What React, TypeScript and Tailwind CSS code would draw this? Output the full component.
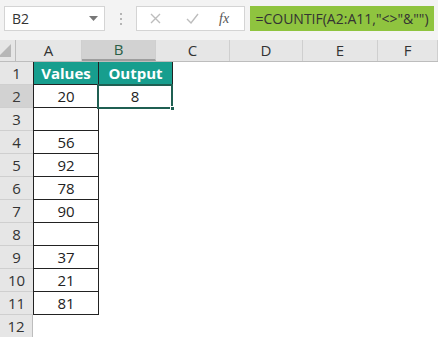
import React from 'react';

const cols = [
  { name: 'A', w: 66 },
  { name: 'B', w: 74 },
  { name: 'C', w: 74 },
  { name: 'D', w: 73 },
  { name: 'E', w: 75 },
  { name: 'F', w: 60 },
];

const values: (string | null)[] = ['20', null, '56', '92', '78', '90', null, '37', '21', '81'];

const font = { fontFamily: '"Open Sans", "Noto Sans", sans-serif' };

const App: React.FC = () => {
  return (
    <div className="w-[438px] h-[337px] overflow-hidden bg-[#f3f3f3] text-[#222]" style={font}>
      {/* Name box + formula bar */}
      <div className="flex items-center h-[40px] pb-[7px] pt-[4px] pl-[4px]">
        <div className="flex items-center justify-between w-[101px] h-[25px] bg-white border border-[#d4d4d4] pl-[7px] pr-[6px]">
          <span className="text-[14px] text-[#333]">B2</span>
          <svg width="9" height="5" viewBox="0 0 9 5"><path d="M0 0h9L4.5 5z" fill="#777" /></svg>
        </div>
        <div className="flex flex-col gap-[3px] ml-[15px] mr-[14px]">
          <span className="w-[2px] h-[2px] bg-[#b5b5b5]" />
          <span className="w-[2px] h-[2px] bg-[#b5b5b5]" />
          <span className="w-[2px] h-[2px] bg-[#b5b5b5]" />
        </div>
        <div className="flex items-center w-[109px] h-[25px] bg-white border border-[#d4d4d4]">
          <svg className="ml-[13px]" width="11" height="11" viewBox="0 0 11 11"><path d="M1 1l9 9M10 1l-9 9" stroke="#bdbdbd" strokeWidth="1.4" /></svg>
          <svg className="ml-[25px]" width="13" height="11" viewBox="0 0 13 11"><path d="M1 6l4 4 7-9" stroke="#bdbdbd" strokeWidth="1.4" fill="none" /></svg>
          <span className="ml-[20px] text-[14px] italic text-[#555]" style={{ fontFamily: '"Liberation Serif", serif' }}>fx</span>
        </div>
        <div className="flex items-center justify-center w-[184px] h-[25px] ml-[5px] bg-[#8fc43f] text-[14px] text-[#333]">
          =COUNTIF(A2:A11,"&lt;&gt;"&amp;"")
        </div>
      </div>

      {/* Column headers */}
      <div className="flex h-[22px] bg-[#e6e6e6] border-b border-[#bdbdbd]">
        <div className="relative w-[33px] border-r border-[#bdbdbd]">
          <svg className="absolute right-[4px] bottom-[4px]" width="13" height="13" viewBox="0 0 13 13"><path d="M13 0v13H0z" fill="#b7b7b7" /></svg>
        </div>
        {cols.map((c) => (
          <div
            key={c.name}
            className={`flex items-center justify-center shrink-0 text-[15px] border-r border-[#cfcfcf] ${c.name === 'B' ? 'bg-[#d2d2d2] text-[#2b5f47] border-b-2 border-b-[#9e9e9e]' : 'text-[#333]'}`}
            style={{ width: c.w }}
          >
            {c.name}
          </div>
        ))}
      </div>

      {/* Rows */}
      <div className="bg-white">
        {Array.from({ length: 12 }, (_, i) => {
          const r = i + 1;
          const isHeader = r === 1;
          const inData = r <= 11;
          const aVal = isHeader ? 'Values' : values[r - 2];
          return (
            <div key={r} className="flex h-[23px]">
              <div className={`flex items-center justify-center w-[33px] shrink-0 text-[15px] border-b border-[#cfcfcf] ${r === 2 ? 'bg-[#d2d2d2] text-[#3a3a3a]' : 'bg-[#e6e6e6] text-[#333]'} ${inData ? '' : 'border-r border-r-[#bdbdbd]'}`}>
                {r}
              </div>
              {inData ? (
                <div className={`flex items-center justify-center w-[66px] shrink-0 text-[15px] border-l border-b border-r border-[#222] ${isHeader ? 'bg-[#179e8e] text-white font-bold' : ''}`}>
                  {aVal}
                </div>
              ) : (
                <div className="w-[66px] shrink-0" />
              )}
              {r === 1 && (
                <div className="flex items-center justify-center w-[74px] shrink-0 text-[15px] border-b border-r border-[#222] bg-[#179e8e] text-white font-bold">
                  Output
                </div>
              )}
              {r === 2 && (
                <div className="relative -ml-[2px] -mt-[1px] flex items-center justify-center w-[76px] h-[25px] shrink-0 text-[15px] border-2 border-[#1f5f52] bg-white">
                  8
                  <span className="absolute -right-[4px] -bottom-[4px] w-[5px] h-[5px] bg-[#1f5f52] border border-white" />
                </div>
              )}
            </div>
          );
        })}
      </div>
    </div>
  );
};

export default App;
